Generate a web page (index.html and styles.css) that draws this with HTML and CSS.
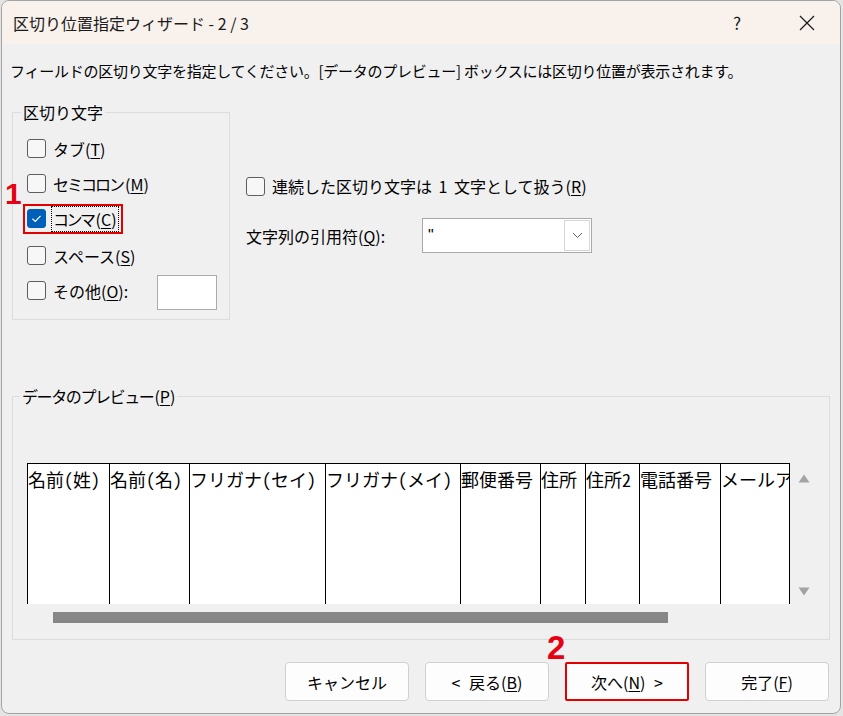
FILE: index.html
```html
<!DOCTYPE html>
<html lang="ja">
<head>
<meta charset="utf-8">
<title>区切り位置指定ウィザード</title>
<link rel="stylesheet" href="styles.css">
</head>
<body>
<div class="window">
  <div class="titlebar">
    <span class="title">区切り位置指定ウィザード - 2 / 3</span>
    <div class="title-controls">
      <span class="help">?</span>
      <span class="close"><svg width="16" height="16" viewBox="0 0 16 16"><path d="M1 1L15 15M15 1L1 15" stroke="#1a1a1a" stroke-width="1.2" fill="none"/></svg></span>
    </div>
  </div>
  <div class="content">
    <p class="intro">フィールドの区切り文字を指定してください。[データのプレビュー] ボックスには区切り位置が表示されます。</p>
    <div class="top">
      <fieldset class="group delims">
        <legend>区切り文字</legend>
        <div class="row"><span class="cb"></span><span class="lbl">タブ(<u>T</u>)</span></div>
        <div class="row"><span class="cb"></span><span class="lbl"><span class="tight">セミコロン</span>(<u>M</u>)</span></div>
        <div class="row"><span class="focus-wrap"><span class="cb checked"><svg width="13" height="13" viewBox="0 0 13 13"><path d="M2.5 6.8L5.3 9.5L10.5 3.8" stroke="#fff" stroke-width="1.2" fill="none"/></svg></span><span class="lbl focus"><span class="tighter">コンマ</span>(<u>C</u>)</span></span></div>
        <div class="row row-gap"><span class="cb"></span><span class="lbl">スペース(<u>S</u>)</span></div>
        <div class="row"><span class="cb"></span><span class="lbl lbl-other">その他(<u>O</u>):</span><span class="textbox"></span></div>
      </fieldset>
      <div class="options">
        <div class="row-opt"><span class="cb"></span><span class="lbl wide">連続した区切り文字は 1 文字として扱う(<u>R</u>)</span></div>
        <div class="quote-row">
          <span class="quote-label">文字列の引用符(<u>Q</u>):</span>
          <div class="combo">
            <span class="combo-val">"</span>
            <span class="combo-btn"><svg width="11" height="7" viewBox="0 0 11 7"><path d="M1 1L5.5 5.5L10 1" stroke="#606060" stroke-width="1" fill="none"/></svg></span>
          </div>
        </div>
      </div>
    </div>
    <fieldset class="group preview">
      <legend><span class="tight-l">データのプレビュー</span>(<u>P</u>)</legend>
      <div class="preview-body">
        <div class="grid">
          <div class="cell">名前(姓)</div>
          <div class="cell">名前(名)</div>
          <div class="cell">フリガナ(セイ)</div>
          <div class="cell">フリガナ(メイ)</div>
          <div class="cell">郵便番号</div>
          <div class="cell">住所</div>
          <div class="cell">住所2</div>
          <div class="cell">電話番号</div>
          <div class="cell">メールアドレス</div>
        </div>
        <div class="vscroll">
          <svg width="12" height="9" viewBox="0 0 12 9"><path d="M6 0.5L11.5 8.5H0.5Z" fill="#a3a3a3"/></svg>
          <svg width="12" height="9" viewBox="0 0 12 9"><path d="M6 8.5L11.5 0.5H0.5Z" fill="#a3a3a3"/></svg>
        </div>
      </div>
      <div class="hscroll"><div class="thumb"></div></div>
    </fieldset>
    <div class="buttons">
      <button class="btn">キャンセル</button>
      <button class="btn spaced">&lt; 戻る(<u>B</u>)</button>
      <button class="btn spaced marked">次へ(<u>N</u>) &gt;</button>
      <button class="btn">完了(<u>F</u>)</button>
    </div>
  </div>
  <span class="badge b1">1</span>
  <span class="badge b2">2</span>
</div>
</body>
</html>
```

FILE: styles.css
```css
* { box-sizing: border-box; }
html, body { margin: 0; padding: 0; }
body {
  background: #e4e4e4;
  font-family: "Noto Sans CJK JP", "Noto Sans", sans-serif;
  color: #000;
  width: 843px;
  height: 716px;
  overflow: hidden;
}
u { text-underline-offset: 2px; text-decoration-thickness: 1px; }

.window {
  position: relative;
  width: 840px;
  height: 714px;
  margin-left: 1px;
  border: 1px solid #a3a3a3;
  border-radius: 8px;
  background: #f0f0f0;
  overflow: hidden;
  display: flex;
  flex-direction: column;
}

.titlebar {
  height: 43px;
  flex: none;
  background: #f8f1ec;
  display: flex;
  align-items: center;
  padding: 0 10px 0 11px;
}
.title { font-size: 16px; line-height: 20px; color: #1b1b1b; }
.title-controls { margin-left: auto; display: flex; gap: 24px; }
.help, .close {
  width: 46px;
  height: 32px;
  display: flex;
  align-items: center;
  justify-content: center;
  color: #1b1b1b;
}
.help { font-size: 17px; }

.content { flex: 1; padding: 0 11px 0 8px; }
.intro {
  margin: 17px 0 0;
  font-size: 15px;
  line-height: 20px;
  letter-spacing: -0.25px;
  white-space: nowrap;
}

.top { display: flex; align-items: flex-start; margin: 21px 0 0 2px; }

.group { margin: 0; border: 1px solid #dcdcdc; min-width: 0; }
.group legend { padding: 0 2px; margin-left: -6px; font-size: 16px; line-height: 20px; }

.delims { width: 218px; height: 218px; padding: 9px 0 0 14px; }

.row { height: 35px; display: flex; align-items: center; gap: 7px; font-size: 16px; }
.row-gap { margin-top: 2px; }
.lbl { font-size: 16px; line-height: 20px; white-space: nowrap; }
.tight { letter-spacing: -2px; margin-right: 2px; }
.tighter { letter-spacing: -2.5px; margin-right: 2px; }
.tight-l { letter-spacing: -1.4px; margin-right: 1px; }
.wide { word-spacing: 3px; }
.cb {
  width: 19px;
  height: 19px;
  flex: none;
  border: 1px solid #5d5d5d;
  border-radius: 3px;
  background: #f7f7f7;
}
.cb.checked {
  background: #005fb8;
  border-color: #005fb8;
  display: flex;
  align-items: center;
  justify-content: center;
}
.focus-wrap {
  display: inline-flex;
  align-items: center;
  gap: 5px;
  margin-left: -2px;
  padding: 0 2px;
  outline: 2px solid #e30000;
}
.focus { border: 1px dotted #000; padding: 0 1px; line-height: 24px; }
.lbl-other { width: 97px; }
.textbox { width: 60px; height: 35px; margin-top: 3px; background: #fff; border: 1px solid #ababab; }

.options { margin-left: 16px; padding-top: 74px; }
.row-opt { display: flex; align-items: center; gap: 7px; height: 20px; }
.quote-row { display: flex; align-items: center; height: 35px; margin-top: 22px; }
.quote-label { width: 176px; font-size: 16px; line-height: 20px; white-space: nowrap; }
.combo {
  width: 170px;
  height: 35px;
  background: #fff;
  border: 1px solid #a9a9a9;
  display: flex;
  align-items: center;
  padding: 1px 1px 1px 5px;
}
.combo-val { flex: 1; font-family: "Liberation Sans", sans-serif; font-size: 16px; }
.combo-btn {
  width: 26px;
  height: 31px;
  border: 1px solid #d6d6d6;
  display: flex;
  align-items: center;
  justify-content: center;
}

.preview { width: 818px; height: 254px; margin: 66px 0 0 2px; padding: 57px 0 0 14px; }
.preview legend { margin-left: -7px; }
.preview-body { display: flex; height: 141px; }
.grid {
  width: 763px;
  height: 141px;
  flex: none;
  background: #fff;
  border-top: 1px solid #000;
  border-right: 1px solid #000;
  display: grid;
  grid-template-columns: 82px 80px 136px 135px 80px 45px 54px 81px 1fr;
  overflow: hidden;
}
.cell {
  border-left: 1px solid #000;
  padding-top: 4px;
  font-family: "Noto Sans Mono CJK JP", "Noto Sans CJK JP", monospace;
  font-size: 18px;
  line-height: 22px;
  white-space: nowrap;
  overflow: hidden;
}
.vscroll {
  margin-left: 8px;
  width: 12px;
  display: flex;
  flex-direction: column;
  justify-content: space-between;
  padding: 11px 0 8px;
}
.vscroll svg { display: block; }
.hscroll { margin: 8px 0 0 26px; }
.thumb { width: 615px; height: 11px; background: #878787; }

.buttons { display: flex; justify-content: flex-end; gap: 16px; margin-top: 22px; }
.btn {
  width: 124px;
  height: 39px;
  border: 1px solid #d0d0d0;
  border-radius: 4px;
  background: #fdfdfd;
  font-family: "Noto Sans CJK JP", sans-serif;
  font-size: 16px;
  color: #000;
  padding: 0;
  display: flex;
  align-items: center;
  justify-content: center;
}
.btn.spaced { word-spacing: 5px; }
.btn.marked { border: 2px solid #e30000; border-radius: 2px; }

.badge {
  position: absolute;
  color: #e60012;
  font-family: "Liberation Sans", sans-serif;
  font-weight: bold;
  line-height: 1;
}
.b1 { left: 3px; top: 178px; font-size: 30px; }
.b2 { left: 545px; top: 630px; font-size: 33px; }
```
